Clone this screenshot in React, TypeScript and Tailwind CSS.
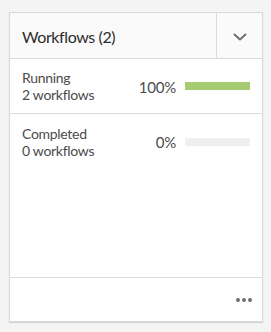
const rows = [
  { label: "Running", count: "2 workflows", pct: 100 },
  { label: "Completed", count: "0 workflows", pct: 0 },
];

export default function App() {
  return (
    <div className="w-[271px] h-[332px] bg-[#f4f4f4] pt-[12px] pl-[9px] font-['Lato',sans-serif]">
      <div className="w-[254px] h-[310px] bg-white border border-[#d9d9d9] shadow-[0_1px_1px_rgba(0,0,0,0.12)] flex flex-col">
        <div className="h-[46px] flex bg-[#fafafa] border-b border-[#dcdcdc]">
          <div className="flex-1 flex items-center pl-[12px] text-[16px] leading-[20px] tracking-[-0.4px] text-[#2c2c2c] pt-[3px]">
            Workflows (2)
          </div>
          <div className="w-[46px] border-l border-[#dcdcdc] flex items-center justify-center pt-[2px]">
            <svg width="14" height="8" viewBox="0 0 14 8" fill="none">
              <path d="M1.5 1.5 L7 6.5 L12.5 1.5" stroke="#6e6e6e" strokeWidth="2" strokeLinecap="round" strokeLinejoin="round" />
            </svg>
          </div>
        </div>
        {rows.map((r, i) => (
          <div
            key={r.label}
            className={
              i === 0
                ? "h-[55px] flex items-center px-[12px] border-b border-[#dcdcdc]"
                : "h-[55px] flex items-center px-[12px]"
            }
          >
            <div className="flex-1 text-[14px] leading-[17px] tracking-[-0.3px] text-[#4b4b4b]">
              <div>{r.label}</div>
              <div>{r.count}</div>
            </div>
            <div className="text-[15px] leading-[18px] tracking-[-0.2px] text-[#4b4b4b] pt-[1px]">{r.pct}%</div>
            <div className="ml-[9px] w-[65px] h-[8px] bg-[#efefef]">
              <div className="h-full bg-[#a6cc73]" style={{ width: `${r.pct}%` }} />
            </div>
          </div>
        ))}
        <div className="flex-1" />
        <div className="h-[44px] border-t border-[#dcdcdc] flex items-center justify-end pr-[10px] gap-[2px]">
          <span className="w-[4px] h-[4px] rounded-full bg-[#707070]" />
          <span className="w-[4px] h-[4px] rounded-full bg-[#707070]" />
          <span className="w-[4px] h-[4px] rounded-full bg-[#707070]" />
        </div>
      </div>
    </div>
  );
}
